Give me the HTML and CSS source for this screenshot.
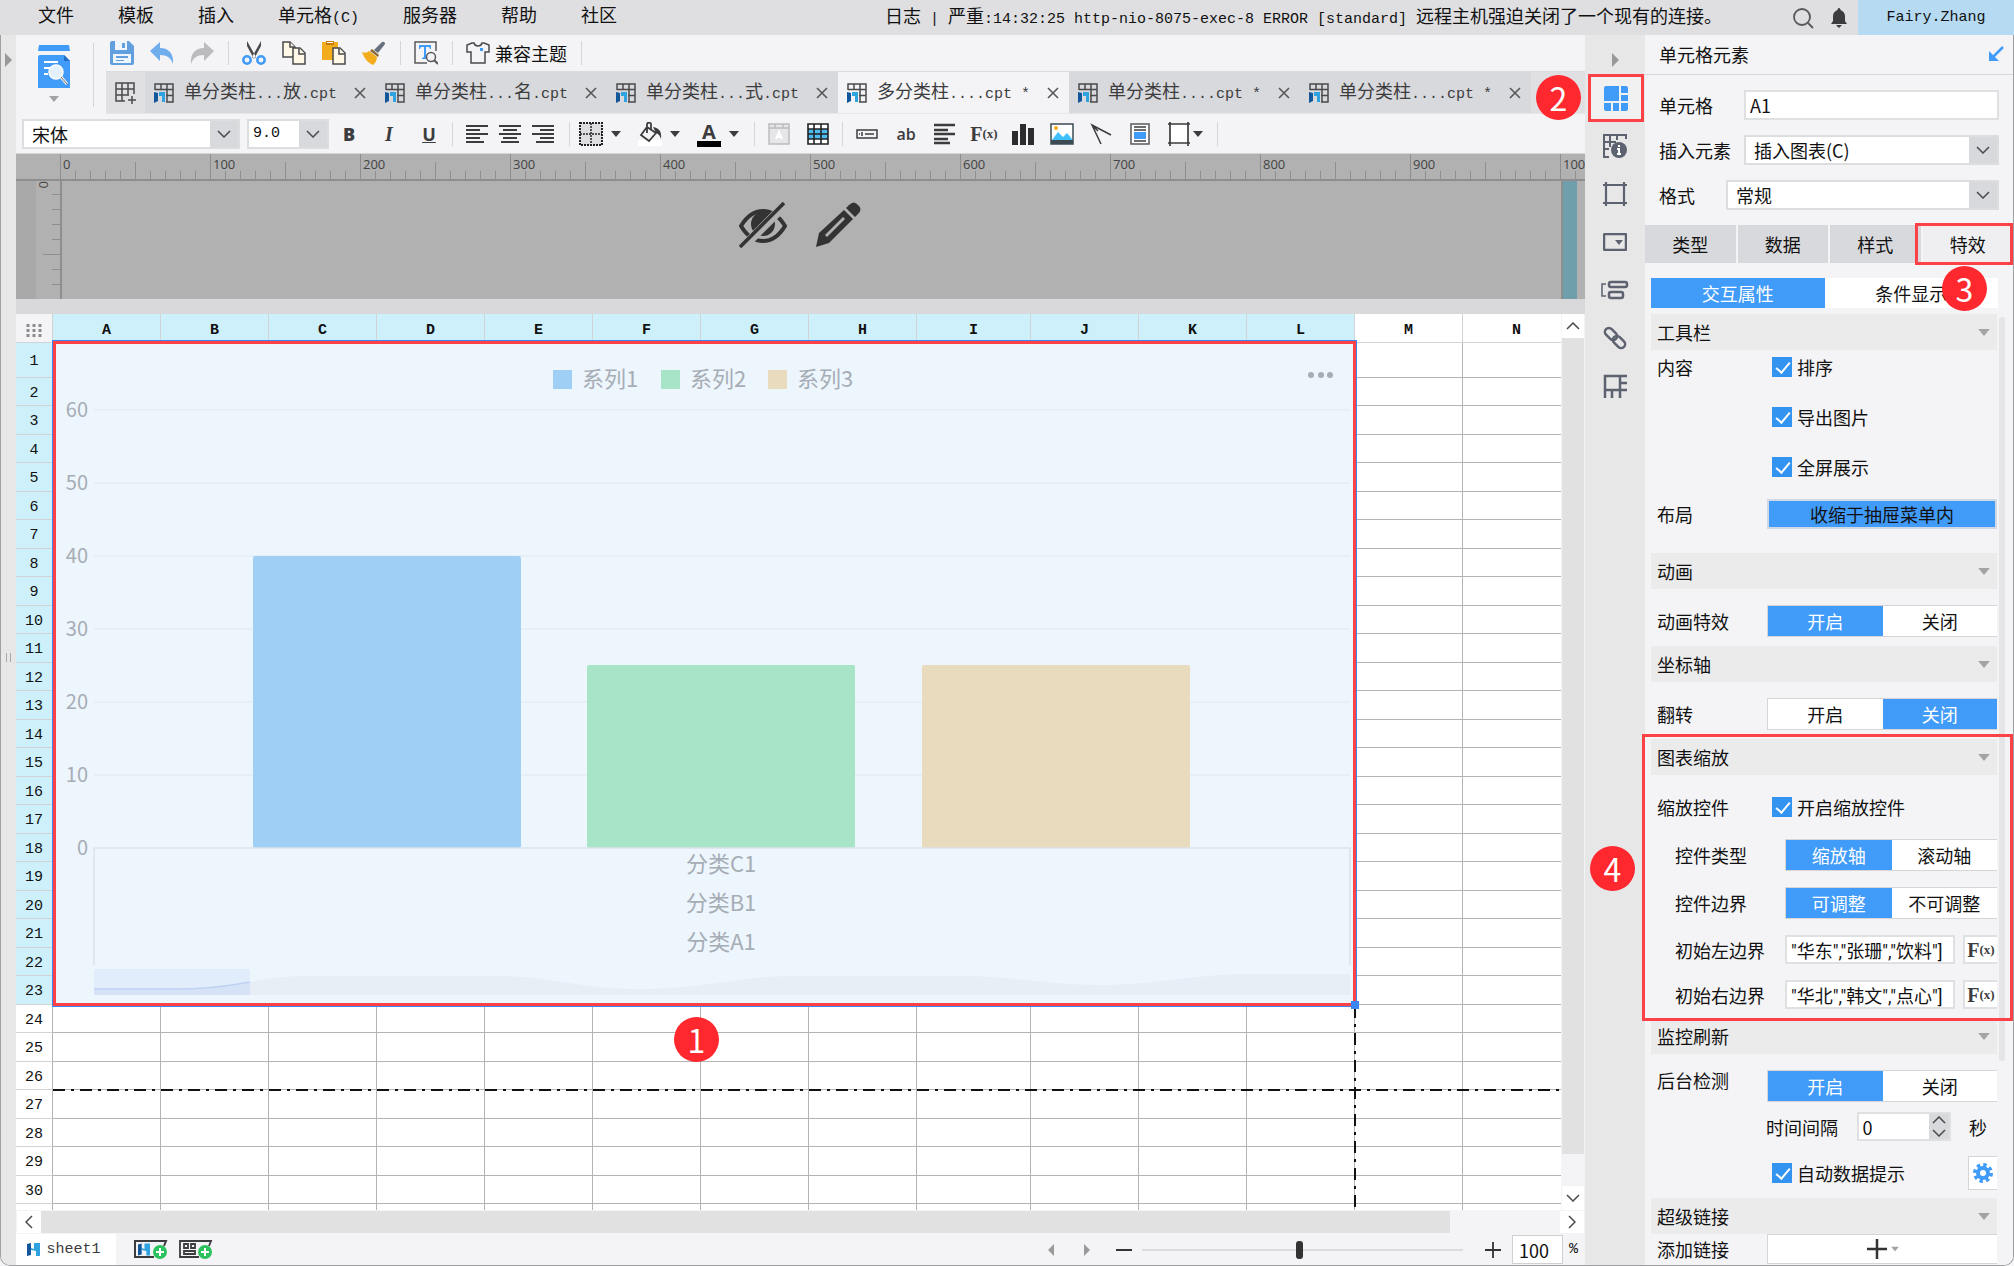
FILE: index.html
```html
<!DOCTYPE html>
<html lang="zh">
<head>
    <meta charset="UTF-8">
    <meta name="viewport" content="width=device-width, initial-scale=1.0">
    <title>报表设计器</title>
    <link rel="stylesheet" href="styles.css">
</head>
<body>
    <!-- 公用图标 -->
    <svg class="hidden" aria-hidden="true">
        <symbol id="i-cpt" viewBox="0 0 20 20">
            <path d="M1 7V1h18v18h-7M1 6.500h18M7 1v6M13 1v18M12 12.500h7" fill="none" stroke="#4a4a4c" stroke-width="1.500"/>
            <path d="M0 9l4 1v8l-4 2z" fill="#12579b"/>
            <path d="M5 9h6v10H8v-6H5z" fill="#2fa3e0"/>
        </symbol>
        <symbol id="i-close" viewBox="0 0 12 12">
            <path d="M1 1l10 10M11 1L1 11" fill="none" stroke="#58585a" stroke-width="1.600"/>
        </symbol>
        <symbol id="i-chevron" viewBox="0 0 14 8">
            <path d="M1 1l6 6 6-6" fill="none" stroke="#4a4a4c" stroke-width="1.500"/>
        </symbol>
        <symbol id="i-caret" viewBox="0 0 10 6">
            <path d="M0 0h10L5 6z" fill="currentColor"/>
        </symbol>
        <symbol id="i-logo" viewBox="0 0 13 13">
            <path d="M4 5l3 1V0h6v13H9V8L4 7z" fill="#2fa3e0"/>
            <path d="M0 1l4-1v12l-4 1z" fill="#12579b"/>
        </symbol>
    </svg>

    <!-- 菜单栏 -->
    <header class="menubar">
        <nav class="menus">
            <button>文件</button>
            <button>模板</button>
            <button>插入</button>
            <button>单元格<span class="mono">(C)</span></button>
            <button>服务器</button>
            <button>帮助</button>
            <button>社区</button>
        </nav>
        <div class="log">日志<span class="mono"> | </span>严重<span class="mono">:14:32:25 http-nio-8075-exec-8 ERROR [standard] </span>远程主机强迫关闭了一个现有的连接。</div>
        <button class="search-btn" aria-label="搜索">
            <svg width="22" height="22" viewBox="0 0 22 22"><g fill="none" stroke="#58585a" stroke-width="1.800"><circle cx="10" cy="10" r="8"/><path d="M16 16l5 5"/></g></svg>
        </button>
        <button class="bell-btn" aria-label="消息">
            <svg width="18" height="20" viewBox="0 0 18 20"><path d="M9 0c1 0 1.500 1 1.500 2C13 3 15 5 15 8v5l2 3H1l2-3V8c0-3 2-5 4.500-6C7.500 1 8 0 9 0zM6 17h6l-3 3z" fill="#3c3c3e"/></svg>
        </button>
        <button class="user mono">Fairy.Zhang</button>
    </header>

    <div class="shell">
        <aside class="left-strip">
            <svg class="strip-arrow" width="7" height="14" viewBox="0 0 7 14"><path d="M0 0l7 7-7 7z" fill="#999"/></svg>
            <span class="strip-grip"></span>
        </aside>

        <main class="workspace">
            <div class="ribbon">
                <button class="preview-btn" aria-label="预览">
                    <svg width="32" height="43" viewBox="0 0 32 43">
                        <path d="M1 0h30l1 6H0zM0 12q0-2 2-2h24l6 6v27H0z" fill="#419bf9"/>
                        <path d="M26 10v6h6z" fill="#1f6fc4"/>
                        <path d="M6 17h14M6 23h6M6 29h4" stroke="#fff" stroke-width="2"/>
                        <circle cx="18" cy="27" r="7" fill="#e3f1fe" stroke="#fff" stroke-width="1.500"/>
                        <path d="M23 32l6 7" stroke="#eee" stroke-width="3"/>
                        <path d="M23 32l6 7" stroke="#777" stroke-width="1"/>
                    </svg>
                    <svg class="gray" width="10" height="6"><use href="#i-caret"/></svg>
                </button>
                <div class="ribbon-main">
                    <div class="icon-row">
                        <button aria-label="保存"><svg width="24" height="24" viewBox="0 0 24 24"><path d="M2 0h17l5 5v17q0 2-2 2H2q-2 0-2-2V2q0-2 2-2z" fill="#629fde"/><path d="M5 0h12v9H5zM3 13h18v9H3z" fill="#eef5fc"/><path d="M12 2h3v5h-3zM6 15h12v2H6zM6 19h8v1H6z" fill="#629fde"/></svg></button>
                        <button aria-label="撤销"><svg width="24" height="24" viewBox="0 0 24 24"><path d="M10 1v6c9 0 14 6 13 16-2-6-6-9-13-9v6L0 10z" fill="#70adec"/></svg></button>
                        <button aria-label="重做"><svg width="24" height="24" viewBox="0 0 24 24"><path d="M14 1v6C5 7 0 13 1 23c2-6 6-9 13-9v6l10-10z" fill="#bcbcbe"/></svg></button>
                        <span class="sep"></span>
                        <button aria-label="剪切"><svg width="24" height="24" viewBox="0 0 24 24"><path d="M5 0l9 16-2 2L5 5zM19 0l-9 16 2 2 7-13z" fill="#4a4a4c"/><g fill="none" stroke="#419bf9" stroke-width="2.500"><circle cx="5" cy="19" r="3.700"/><circle cx="19" cy="19" r="3.700"/></g></svg></button>
                        <button aria-label="复制"><svg width="24" height="24" viewBox="0 0 24 24"><g fill="#fff8e6" stroke="#4a4a4c" stroke-width="1.500"><path d="M1 1h7l5 5v10H1z"/><path d="M8 1v5h5" /><path d="M11 7h7l5 5v11H11z"/><path d="M17 7v6h6"/></g></svg></button>
                        <button aria-label="粘贴"><svg width="24" height="24" viewBox="0 0 24 24"><path d="M0 1h16v18H0z" fill="#f2ac1c"/><path d="M4 0h8v4H4z" fill="#c87d08"/><path d="M5 1h6v1H5z" fill="#fff"/><g fill="#fff8e6" stroke="#4a4a4c" stroke-width="1.500"><path d="M11 7h7l5 5v11H11z"/><path d="M17 7v6h6"/></g></svg></button>
                        <button aria-label="格式刷"><svg width="24" height="24" viewBox="0 0 24 24"><path d="M20 1q3-1 3 2l-7 9-4-3z" fill="#66707e"/><path d="M10 8l7 6-1 2-8-6z" fill="#8c6a3a"/><path d="M7 10l8 6c0 3-2 7-4 8C6 22 2 17 0 11c3 1 5 1 7-1z" fill="#f2ac1c"/></svg></button>
                        <span class="sep"></span>
                        <button aria-label="查找"><svg width="24" height="24" viewBox="0 0 24 24"><path d="M22 10V1H1v21h12" fill="none" stroke="#58585a" stroke-width="1.500"/><path d="M5 4h12v4h-1l-1-2h-3v10l2 1v1H8v-1l2-1V6H7L6 8H5z" fill="#419bf9"/><circle cx="17" cy="16" r="4.500" fill="#f4f4f6" stroke="#58585a" stroke-width="1.500"/><path d="M20 19l4 4" stroke="#58585a" stroke-width="2"/></svg></button>
                        <span class="sep"></span>
                        <button class="theme-btn"><svg width="24" height="24" viewBox="0 0 24 24"><path d="M8 2H6L1 4v7h4v11h14V11h4V4l-5-2h-2c-1 4-7 4-8 0z" fill="none" stroke="#4a4a4c" stroke-width="1.500"/><path d="M14 7h3v3h-3z" fill="#419bf9"/></svg>兼容主题</button>
                        <span class="sep"></span>
                    </div>
                    <div class="file-tabs">
                        <button class="new-tab" aria-label="新建"><svg width="22" height="22" viewBox="0 0 22 22"><path d="M10 19H1V1h18v11M1 7h18M7 1v18M13 1v12M1 13h13M17 14v8M13 18h8" fill="none" stroke="#4a4a4c" stroke-width="1.500"/></svg></button>
                        <div class="file-tab"><svg width="20" height="20"><use href="#i-cpt"/></svg><span class="name">单分类柱<span class="mono">...</span>放<span class="mono">.cpt</span></span><button aria-label="关闭"><svg width="12" height="12"><use href="#i-close"/></svg></button></div>
                        <div class="file-tab"><svg width="20" height="20"><use href="#i-cpt"/></svg><span class="name">单分类柱<span class="mono">...</span>名<span class="mono">.cpt</span></span><button aria-label="关闭"><svg width="12" height="12"><use href="#i-close"/></svg></button></div>
                        <div class="file-tab"><svg width="20" height="20"><use href="#i-cpt"/></svg><span class="name">单分类柱<span class="mono">...</span>式<span class="mono">.cpt</span></span><button aria-label="关闭"><svg width="12" height="12"><use href="#i-close"/></svg></button></div>
                        <div class="file-tab active"><svg width="20" height="20"><use href="#i-cpt"/></svg><span class="name">多分类柱<span class="mono">....cpt *</span></span><button aria-label="关闭"><svg width="12" height="12"><use href="#i-close"/></svg></button></div>
                        <div class="file-tab"><svg width="20" height="20"><use href="#i-cpt"/></svg><span class="name">单分类柱<span class="mono">....cpt *</span></span><button aria-label="关闭"><svg width="12" height="12"><use href="#i-close"/></svg></button></div>
                        <div class="file-tab"><svg width="20" height="20"><use href="#i-cpt"/></svg><span class="name">单分类柱<span class="mono">....cpt *</span></span><button aria-label="关闭"><svg width="12" height="12"><use href="#i-close"/></svg></button></div>
                    </div>
                </div>
            </div>

            <!-- 格式工具栏 -->
            <div class="format-bar">
                <div class="combo font-name">
                    <select aria-label="字体"><option>宋体</option></select>
                    <span class="combo-btn"><svg width="14" height="8"><use href="#i-chevron"/></svg></span>
                </div>
                <div class="combo font-size">
                    <select class="mono" aria-label="字号"><option>9.0</option></select>
                    <span class="combo-btn"><svg width="14" height="8"><use href="#i-chevron"/></svg></span>
                </div>
                <div class="group wide">
                    <button class="letter"><b>B</b></button>
                    <button class="letter italic"><i>I</i></button>
                    <button class="letter"><u>U</u></button>
                </div>
                <div class="group tight">
                    <button aria-label="左对齐"><svg width="24" height="20" viewBox="0 0 24 20"><path d="M1 2h22M1 6h14M1 10h22M1 14h14M1 18h18" stroke="#3c3c3e" stroke-width="2"/></svg></button>
                    <button aria-label="居中"><svg width="24" height="20" viewBox="0 0 24 20"><path d="M1 2h22M5 6h14M1 10h22M5 14h14M3 18h18" stroke="#3c3c3e" stroke-width="2"/></svg></button>
                    <button aria-label="右对齐"><svg width="24" height="20" viewBox="0 0 24 20"><path d="M1 2h22M9 6h14M1 10h22M9 14h14M5 18h18" stroke="#3c3c3e" stroke-width="2"/></svg></button>
                </div>
                <div class="group pairs">
                    <button class="with-caret" aria-label="边框"><svg width="24" height="24" viewBox="0 0 24 24"><path d="M1 1h22v22H1z" fill="#dedee0" stroke="#222" stroke-width="2" stroke-dasharray="2 1"/><path d="M12 1v22M1 12h22" stroke="#222" stroke-width="1.500" stroke-dasharray="2 1"/></svg><svg width="10" height="6"><use href="#i-caret"/></svg></button>
                    <button class="with-caret" aria-label="背景色"><svg width="24" height="24" viewBox="0 0 24 24"><path d="M0 18h24v6H0z" fill="#fff"/><path d="M9 5l9 6-7 8-8-6zM9 11V2q2-3 4 0v5" fill="none" stroke="#3c3c3e" stroke-width="1.800"/><path d="M15 5c6 1 9 4 8 12-1-3-2-5-5-6z" fill="#3c3c3e"/></svg><svg width="10" height="6"><use href="#i-caret"/></svg></button>
                    <button class="with-caret" aria-label="字体颜色"><span class="font-color">A</span><svg width="10" height="6"><use href="#i-caret"/></svg></button>
                </div>
                <div class="group">
                    <button aria-label="合并"><svg width="24" height="22" viewBox="0 0 24 22"><path d="M2 1h20v20H2zM2 5h20M8 1v4M16 1v4" fill="#e6e6e8" stroke="#bcbcbe" stroke-width="1.500"/><path d="M9 16l3-7 3 7M10 14h4" fill="none" stroke="#fff" stroke-width="2"/></svg></button>
                    <button aria-label="拆分"><svg width="24" height="22" viewBox="0 0 24 22"><path d="M2 1h20v20H2z" fill="#fff"/><path d="M2 6h20v10H2z" fill="#4cbcf0"/><path d="M2 1h20v20H2zM2 6h20M2 11h20M2 16h20M8 1v20M15 1v20" fill="none" stroke="#222" stroke-width="1.600"/></svg></button>
                </div>
                <div class="group last">
                    <button aria-label="数据列"><svg width="24" height="24" viewBox="0 0 24 24"><path d="M2 8h20v8H2zM7 10v4M10 12h9M4 12h1" fill="none" stroke="#3c3c3e" stroke-width="1.500"/></svg></button>
                    <button class="ab">ab</button>
                    <button aria-label="富文本"><svg width="24" height="22" viewBox="0 0 24 22"><path d="M1 2h21M1 7h14M1 11h21M1 16h14M1 20h16" stroke="#3c3c3e" stroke-width="2.500"/></svg></button>
                    <button class="fx">F<small>(x)</small></button>
                    <button aria-label="图表"><svg width="24" height="22" viewBox="0 0 24 22"><path d="M1 8h6v14H1zM9 1h6v21H9zM17 5h6v17h-6z" fill="#2c2c2e"/></svg></button>
                    <button aria-label="图片"><svg width="24" height="22" viewBox="0 0 24 22"><path d="M1 1h22v20H1z" fill="#fff" stroke="#3c4a54" stroke-width="1.500"/><path d="M2 17l6-8 5 5 4-4 5 6v2H2z" fill="#3fc0fb"/><path d="M1 17h22v4H1z" fill="#3c4a54"/><circle cx="6" cy="5" r="2" fill="#f2ac1c"/></svg></button>
                    <button aria-label="斜线"><svg width="24" height="24" viewBox="0 0 24 24"><path d="M12 22L3 3l19 10M3 3l6 6" fill="none" stroke="#3c3c3e" stroke-width="1.500"/></svg></button>
                    <button aria-label="子报表"><svg width="24" height="22" viewBox="0 0 24 22"><path d="M3 1h18v20H3z" fill="#fff" stroke="#58585a" stroke-width="1.500"/><path d="M6 4h12M6 7h12M6 18h12" stroke="#3c3c3e" stroke-width="1.500"/><path d="M6 9h12v7H6z" fill="#419bf9"/></svg></button>
                    <button class="with-caret" aria-label="悬浮元素"><svg width="24" height="24" viewBox="0 0 24 24"><path d="M3 3h18v18H3z" fill="#fff"/><path d="M1 2h22M1 21h22M3 0v24M21 0v24" fill="none" stroke="#3c3c3e" stroke-width="1.700"/></svg><svg width="10" height="6"><use href="#i-caret"/></svg></button>
                </div>
            </div>

            <!-- 报表头区域 -->
            <section class="report-head">
                <div class="ruler">
                    <span class="mark">0</span><span class="mark">100</span><span class="mark">200</span><span class="mark">300</span><span class="mark">400</span><span class="mark">500</span><span class="mark">600</span><span class="mark">700</span><span class="mark">800</span><span class="mark">900</span><span class="mark">1000</span>
                </div>
                <div class="head-body">
                    <div class="v-ruler"><span>0</span></div>
                    <div class="head-canvas">
                        <svg width="48" height="46" viewBox="0 0 48 46" fill="none" stroke="#333">
                            <path d="M2 24C8 14 15 9 24 9s16 5 22 15c-6 10-13 15-22 15S8 34 2 24z" stroke-width="4"/>
                            <circle cx="24" cy="22" r="12" fill="#333" stroke="none"/>
                            <path d="M2 47L48 1" stroke="#b1b1b1" stroke-width="9"/>
                            <path d="M1 45L45 1" stroke-width="3.500"/>
                        </svg>
                        <svg width="46" height="46" viewBox="0 0 46 46">
                            <path d="M34 3q5-5 9 0 5 4 0 9l-3 3-9-9z" fill="#333"/>
                            <path d="M29 8l9 9-24 24-13 4 3-14z" fill="#333"/>
                            <path d="M28 15l2 2-18 18-2-2z" fill="#b1b1b1"/>
                        </svg>
                    </div>
                    <div class="head-edge"></div>
                </div>
            </section>

            <!-- 表格区域 -->
            <div class="sheet-area">
                <div class="sheet">
                    <table class="cells">
                        <colgroup>
                            <col class="c-head"><col><col><col><col><col><col><col><col><col class="c-wide"><col><col><col><col><col>
                        </colgroup>
                        <thead><tr id="colHeads"></tr></thead>
                        <tbody id="rows"></tbody>
                    </table>
                    <svg class="page-line-h" width="100%" height="2"><path d="M0 1h4000" stroke="#111" stroke-width="2" stroke-dasharray="12 6 3 6"/></svg>
                    <svg class="page-line-v" width="2" height="100%"><path d="M1 0v2000" stroke="#111" stroke-width="2" stroke-dasharray="12 6 3 6"/></svg>

                    <div class="chart">
                        <svg viewBox="0 0 1297 659" width="100%" height="100%">
                            <g stroke="#e4ecf4" stroke-width="1.500">
                                <path d="M38 66h1256M38 139h1256M38 212h1256M38 285h1256M38 358h1256M38 431h1256"/>
                            </g>
                            <g class="axis-label" text-anchor="end">
                                <text x="32" y="73">60</text>
                                <text x="32" y="146">50</text>
                                <text x="32" y="219">40</text>
                                <text x="32" y="292">30</text>
                                <text x="32" y="365">20</text>
                                <text x="32" y="438">10</text>
                                <text x="32" y="511">0</text>
                            </g>
                            <rect x="197" y="212" width="268" height="292" rx="2" fill="#a0cff6"/>
                            <rect x="531" y="321" width="268" height="183" rx="2" fill="#a8e4c7"/>
                            <rect x="866" y="321" width="268" height="183" rx="2" fill="#e9dbbd"/>
                            <path d="M38 621V504h1256v117" fill="none" stroke="#dae2ea" stroke-width="1.500"/>
                            <rect x="497" y="26" width="19" height="19" fill="#a0cff6"/>
                            <rect x="605" y="26" width="19" height="19" fill="#a8e4c7"/>
                            <rect x="712" y="26" width="19" height="19" fill="#e9dbbd"/>
                            <g class="legend-label">
                                <text x="526" y="43">系列1</text>
                                <text x="634" y="43">系列2</text>
                                <text x="741" y="43">系列3</text>
                            </g>
                            <g fill="#a6adb5"><circle cx="1255" cy="31" r="3"/><circle cx="1265" cy="31" r="3"/><circle cx="1274" cy="31" r="3"/></g>
                            <g class="legend-label" text-anchor="middle">
                                <text x="665" y="528">分类C1</text>
                                <text x="665" y="567">分类B1</text>
                                <text x="665" y="606">分类A1</text>
                            </g>
                            <!-- 缩放轴 -->
                            <path d="M194 638C225 632 240 632 260 632H440C500 632 520 645 585 645S680 632 740 632H900C960 632 990 641 1044 641S1140 630 1194 630H1294V651H194z" fill="#e7eef6"/>
                            <rect x="38" y="625" width="156" height="26" fill="#e2edfb"/>
                            <path d="M38 645H120C160 645 180 640 194 638V651H38z" fill="#d6e3f6"/>
                            <path d="M38 645H120C160 645 180 640 194 638" fill="none" stroke="#bfd2f2" stroke-width="1.500"/>
                        </svg>
                    </div>
                    <span class="chart-handle"></span>
                    <span class="badge badge-1">1</span>
                </div>
                <div class="v-scroll">
                    <button aria-label="向上"><svg class="up" width="14" height="8"><use href="#i-chevron"/></svg></button>
                    <div class="v-thumb"></div>
                    <button aria-label="向下"><svg width="14" height="8"><use href="#i-chevron"/></svg></button>
                </div>
            </div>
            <div class="h-scroll">
                <button aria-label="向左"><svg width="8" height="14" viewBox="0 0 8 14"><path d="M7 1L1 7l6 6" fill="none" stroke="#4a4a4c" stroke-width="1.500"/></svg></button>
                <div class="h-thumb"></div>
                <button aria-label="向右"><svg width="8" height="14" viewBox="0 0 8 14"><path d="M1 1l6 6-6 6" fill="none" stroke="#4a4a4c" stroke-width="1.500"/></svg></button>
            </div>

            <footer class="status-bar">
                <button class="sheet-tab mono"><svg width="13" height="13"><use href="#i-logo"/></svg>sheet1</button>
                <button class="add-sheet" aria-label="新增工作表"><svg width="34" height="20" viewBox="0 0 34 20"><path d="M20 17H1V1h31l-2 5" fill="none" stroke="#3c3c3e" stroke-width="2"/><use href="#i-logo" x="4" y="3" width="12" height="13"/><circle cx="26" cy="12" r="7" fill="#2bc25e"/><path d="M26 8v8M22 12h8" stroke="#fff" stroke-width="2"/></svg></button>
                <button class="add-sheet" aria-label="新增聚合报表"><svg width="34" height="20" viewBox="0 0 34 20"><path d="M20 17H1V1h31l-2 5M5 4h4v4H5zM12 4h4v4h-4zM5 11h11v3H5z" fill="none" stroke="#3c3c3e" stroke-width="1.800"/><circle cx="26" cy="12" r="7" fill="#2bc25e"/><path d="M26 8v8M22 12h8" stroke="#fff" stroke-width="2"/></svg></button>
                <div class="zoom-tools">
                    <button aria-label="上一页"><svg width="6" height="12" viewBox="0 0 6 12"><path d="M6 0v12L0 6z" fill="#999"/></svg></button>
                    <button class="page-next" aria-label="下一页"><svg width="6" height="12" viewBox="0 0 6 12"><path d="M0 0v12l6-6z" fill="#999"/></svg></button>
                    <button aria-label="缩小"><svg width="16" height="16" viewBox="0 0 16 16"><path d="M0 8h16" stroke="#333" stroke-width="2"/></svg></button>
                    <input class="zoom-range" type="range" min="0" max="100" value="49" aria-label="缩放">
                    <button aria-label="放大"><svg width="16" height="16" viewBox="0 0 16 16"><path d="M0 8h16M8 0v16" stroke="#333" stroke-width="1.800"/></svg></button>
                    <input class="zoom-value" id="zoomValue" type="text" value="100">
                    <label class="mono" for="zoomValue">%</label>
                </div>
            </footer>
        </main>

        <!-- 侧边图标 -->
        <aside class="side-strip">
            <button class="side-fold" aria-label="收起"><svg width="7" height="14" viewBox="0 0 7 14"><path d="M0 0l7 7-7 7z" fill="#999"/></svg></button>
            <button class="side-btn current" aria-label="单元格元素">
                <svg width="24" height="25" viewBox="0 0 24 25" fill="#419bf9"><path d="M0 2q0-2 2-2h13v15H0zM17 0h5q2 0 2 2v5h-7zM17 9h7v6h-7zM0 17h7v8H2q-2 0-2-2zM9 17h6v8H9zM17 17h7v6q0 2-2 2h-5z"/></svg>
                <span class="badge badge-2">2</span>
            </button>
            <button class="side-btn" aria-label="单元格属性"><svg width="26" height="26" viewBox="0 0 26 26"><path d="M24 6V2H2v22h5M2 9h12M8 2v12M15 2v5M2 16h5" fill="none" stroke="#5c6270" stroke-width="2"/><circle cx="17" cy="17" r="8" fill="#5c6270"/><path d="M17 12v2M15 16h2v5M15 21h4" fill="none" stroke="#fff" stroke-width="2"/></svg></button>
            <button class="side-btn" aria-label="悬浮元素"><svg width="24" height="24" viewBox="0 0 24 24"><path d="M3 3h18v18H3zM0 3h24M0 21h24M3 0v24M21 0v24" fill="none" stroke="#5c6270" stroke-width="2.200"/></svg></button>
            <button class="side-btn" aria-label="控件设置"><svg width="24" height="18" viewBox="0 0 24 18"><rect x="1" y="1" width="22" height="16" rx="1" fill="none" stroke="#5c6270" stroke-width="2.500"/><path d="M12 7h8l-4 5z" fill="#5c6270"/></svg></button>
            <button class="side-btn" aria-label="条件属性"><svg width="28" height="20" viewBox="0 0 28 20" fill="none" stroke="#5c6270"><path d="M5 4H1v12h4" stroke-width="1.500"/><rect x="8" y="2" width="18" height="5" rx="2" stroke-width="2.500"/><rect x="8" y="12" width="14" height="6" rx="2" stroke-width="2.500"/></svg></button>
            <button class="side-btn" aria-label="超级链接"><svg width="24" height="24" viewBox="0 0 24 24" fill="none" stroke="#5c6270" stroke-width="2.500"><rect x="1" y="4" width="14" height="8" rx="4" transform="rotate(45 8 8)"/><rect x="9" y="12" width="14" height="8" rx="4" transform="rotate(45 16 16)"/></svg></button>
            <button class="side-btn" aria-label="冻结"><svg width="24" height="24" viewBox="0 0 24 24"><path d="M2 24V2h22M17 2v22M2 16h22M9 16v8M17 9h7" fill="none" stroke="#5c6270" stroke-width="2.500"/></svg></button>
            <span class="badge badge-4">4</span>
        </aside>

        <!-- 属性面板 -->
        <aside class="panel">
            <div class="panel-title">单元格元素
                <svg width="16" height="16" viewBox="0 0 16 16"><path d="M15 1L5 11" stroke="#419bf9" stroke-width="2.500"/><path d="M1 5v10h10z" fill="#419bf9"/></svg>
            </div>
            <div class="panel-form">
                <div class="field"><label for="cell">单元格</label><input id="cell" class="text-box" type="text" value="A1"></div>
                <div class="field"><label for="insertType">插入元素</label>
                    <div class="combo"><select id="insertType"><option>插入图表(C)</option></select><span class="combo-btn"><svg width="14" height="8"><use href="#i-chevron"/></svg></span></div>
                </div>
                <div class="field short"><label for="format">格式</label>
                    <div class="combo"><select id="format"><option>常规</option></select><span class="combo-btn"><svg width="14" height="8"><use href="#i-chevron"/></svg></span></div>
                </div>
            </div>
            <div class="panel-tabs">
                <button>类型</button>
                <button>数据</button>
                <button>样式</button>
                <button class="active">特效</button>
                <span class="mark-box tab-mark"></span>
                <span class="badge badge-3">3</span>
            </div>
            <div class="sub-tabs">
                <button class="on">交互属性</button>
                <button>条件显示</button>
            </div>

            <div class="panel-scroll">
                <div class="panel-body">
                    <h3 class="section">工具栏<svg class="gray" width="12" height="7" viewBox="0 0 10 6"><use href="#i-caret"/></svg></h3>
                    <div class="row top">
                        <span class="label">内容</span>
                        <div class="checks">
                            <label class="check"><input type="checkbox" checked>排序</label>
                            <label class="check"><input type="checkbox" checked>导出图片</label>
                            <label class="check"><input type="checkbox" checked>全屏展示</label>
                        </div>
                    </div>
                    <div class="row layout">
                        <span class="label">布局</span>
                        <button class="layout-btn">收缩于抽屉菜单内</button>
                    </div>

                    <h3 class="section spaced">动画<svg class="gray" width="12" height="7" viewBox="0 0 10 6"><use href="#i-caret"/></svg></h3>
                    <div class="row">
                        <span class="label">动画特效</span>
                        <div class="seg"><button class="on">开启</button><button>关闭</button></div>
                    </div>

                    <h3 class="section">坐标轴<svg class="gray" width="12" height="7" viewBox="0 0 10 6"><use href="#i-caret"/></svg></h3>
                    <div class="row">
                        <span class="label">翻转</span>
                        <div class="seg"><button>开启</button><button class="on">关闭</button></div>
                    </div>

                    <div class="zoom-group">
                        <h3 class="section">图表缩放<svg class="gray" width="12" height="7" viewBox="0 0 10 6"><use href="#i-caret"/></svg></h3>
                        <div class="row">
                            <span class="label">缩放控件</span>
                            <label class="check"><input type="checkbox" checked>开启缩放控件</label>
                        </div>
                        <div class="row sub">
                            <span class="label">控件类型</span>
                            <div class="seg"><button class="on">缩放轴</button><button>滚动轴</button></div>
                        </div>
                        <div class="row sub">
                            <span class="label">控件边界</span>
                            <div class="seg"><button class="on">可调整</button><button>不可调整</button></div>
                        </div>
                        <div class="row sub low">
                            <label class="label" for="leftEdge">初始左边界</label>
                            <input id="leftEdge" class="text-box" type="text" value="&quot;华东&quot;,&quot;张珊&quot;,&quot;饮料&quot;]">
                            <button class="fx fx-btn">F<small>(x)</small></button>
                        </div>
                        <div class="row sub low">
                            <label class="label" for="rightEdge">初始右边界</label>
                            <input id="rightEdge" class="text-box" type="text" value="&quot;华北&quot;,&quot;韩文&quot;,&quot;点心&quot;]">
                            <button class="fx fx-btn">F<small>(x)</small></button>
                        </div>
                        <span class="mark-box group-mark"></span>
                    </div>

                    <h3 class="section">监控刷新<svg class="gray" width="12" height="7" viewBox="0 0 10 6"><use href="#i-caret"/></svg></h3>
                    <div class="row">
                        <span class="label raised">后台检测</span>
                        <div class="seg"><button class="on">开启</button><button>关闭</button></div>
                    </div>
                    <div class="row low interval">
                        <label for="interval">时间间隔</label>
                        <div class="spinner">
                            <input id="interval" type="text" value="0">
                            <span class="spin-btns">
                                <button aria-label="增加"><svg class="up" width="14" height="8"><use href="#i-chevron"/></svg></button>
                                <button aria-label="减少"><svg width="14" height="8"><use href="#i-chevron"/></svg></button>
                            </span>
                        </div>
                        <span>秒</span>
                    </div>
                    <div class="row">
                        <span class="label"></span>
                        <label class="check"><input type="checkbox" checked>自动数据提示</label>
                        <button class="gear-btn" aria-label="设置"><svg width="20" height="20" viewBox="0 0 20 20"><circle cx="10" cy="10" r="5" fill="none" stroke="#419bf9" stroke-width="4"/><circle cx="10" cy="10" r="8" fill="none" stroke="#419bf9" stroke-width="4" stroke-dasharray="3.300 2.983"/></svg></button>
                    </div>

                    <h3 class="section">超级链接<svg class="gray" width="12" height="7" viewBox="0 0 10 6"><use href="#i-caret"/></svg></h3>
                    <div class="row flush">
                        <span class="label">添加链接</span>
                        <button class="add-link" aria-label="添加链接"><svg width="20" height="20" viewBox="0 0 20 20"><path d="M0 10h20M10 0v20" stroke="#333" stroke-width="2.500"/></svg><svg class="gray" width="8" height="6" viewBox="0 0 10 6"><use href="#i-caret"/></svg></button>
                    </div>
                </div>
                <div class="panel-bar"></div>
            </div>
        </aside>
    </div>

    <script>
        // 生成列头和单元格
        const cols = 'ABCDEFGHIJKLMN'.split('');
        const selectedCols = 12;
        const selectedRows = 23;

        const corner = '<th class="corner"><svg width="16" height="14" viewBox="0 0 16 14"><path d="M2 0v14M8 0v14M14 0v14" stroke="#8c8c8e" stroke-width="3" stroke-dasharray="3 2"/></svg></th>';
        document.getElementById('colHeads').innerHTML = corner + cols.map(function (c, i) {
            return '<th class="' + (i < selectedCols ? 'selected' : '') + '">' + c + '</th>';
        }).join('');

        let html = '';
        for (let r = 1; r <= 31; r++) {
            html += '<tr><th class="' + (r <= selectedRows ? 'selected' : '') + '">' + (r <= 30 ? r : '') + '</th>' + '<td></td>'.repeat(cols.length) + '</tr>';
        }
        document.getElementById('rows').innerHTML = html;
    </script>
</body>
</html>
```

FILE: styles.css
```css
* {
    box-sizing: border-box;
}
body {
    margin: 0;
    height: 100vh;
    display: flex;
    flex-direction: column;
    overflow: hidden;
    background-color: #f4f4f6;
    color: #111;
    font-family: "Noto Sans CJK SC", sans-serif;
    font-size: 18px;
    line-height: 24px;
}
button, input, select {
    font: inherit;
    color: inherit;
    margin: 0;
    padding: 0;
    border: none;
    background: none;
    border-radius: 0;
}
button {
    display: flex;
    align-items: center;
    justify-content: center;
    flex: none;
    cursor: pointer;
    white-space: nowrap;
}
svg {
    display: block;
    flex: none;
}
.hidden {
    display: none;
}
.mono {
    font-family: "Liberation Mono", monospace;
    font-size: 15px;
    white-space: pre;
}
.gray {
    color: #a3a3a5;
}
.up {
    transform: rotate(180deg);
}

/* 菜单栏 */
.menubar {
    display: flex;
    align-items: center;
    flex: none;
    height: 35px;
    padding-left: 38px;
    background-color: #dfdfe1;
}
.menus {
    display: flex;
    gap: 44px;
    flex: 1;
    padding-bottom: 3px;
}
.menus button {
    align-items: baseline;
}
.log {
    white-space: nowrap;
    margin-right: 70px;
}
.search-btn {
    margin-right: 16px;
}
.bell-btn {
    margin-right: 10px;
}
.user {
    width: 156px;
    height: 35px;
    background-color: #b5daf2;
}

.shell {
    display: flex;
    flex: 1;
    min-height: 0;
    border: 1px solid #a0a0a2;
    border-top: none;
    border-radius: 0 0 10px 10px;
    overflow: hidden;
}
.left-strip {
    flex: none;
    width: 15px;
    display: flex;
    flex-direction: column;
    align-items: center;
    background-color: #e7e7e7;
    padding: 18px 0;
}
.strip-grip {
    width: 5px;
    height: 9px;
    margin: auto 0;
    border: 1px solid #aaa;
    border-width: 0 1px;
}
.workspace {
    flex: 1;
    min-width: 0;
    display: flex;
    flex-direction: column;
}

/* 工具栏 */
.ribbon {
    display: flex;
    height: 80px;
}
.preview-btn {
    flex-direction: column;
    justify-content: flex-start;
    gap: 8px;
    width: 78px;
    height: 64px;
    margin: 8px 12px 0 0;
    padding: 2px 23px 0 22px;
    border-right: 1px solid #d5d5d8;
}
.ribbon-main {
    flex: 1;
    min-width: 0;
}
.icon-row {
    display: flex;
    align-items: center;
    gap: 16px;
    height: 36px;
    padding-left: 4px;
}
.sep {
    width: 1px;
    height: 24px;
    margin: 0 -3px 0 -2px;
    background-color: #d5d5d8;
}
.theme-btn {
    gap: 5px;
}
.file-tabs {
    display: flex;
    height: 43px;
    border-top: 1px solid #dcdcdf;
    border-bottom: 1px solid #e6e6e8;
    background-color: #e0e0e3;
}
.new-tab {
    width: 39px;
}
.file-tab {
    display: flex;
    align-items: center;
    flex: 0 1 231px;
    min-width: 0;
    padding: 0 10px 0 9px;
    background-color: #d8d9dc;
    color: #3c3c3e;
}
.file-tab.active {
    background-color: #f4f4f6;
}
.file-tab .name {
    flex: 1;
    margin-left: 10px;
    white-space: nowrap;
    overflow: hidden;
}
.format-bar {
    display: flex;
    align-items: center;
    flex: none;
    height: 39px;
    padding-left: 6px;
    border-bottom: 1px solid #d5d5d8;
}
.combo {
    display: flex;
    flex: 1;
    min-width: 0;
    height: 30px;
    border: 2px solid #dcdddf;
    background-color: #fff;
}
.combo select {
    flex: 1;
    min-width: 0;
    padding-left: 8px;
    appearance: none;
    outline: none;
}
.combo-btn {
    display: flex;
    align-items: center;
    justify-content: center;
    width: 28px;
    background-color: #d8d9dc;
}
.font-name {
    flex: 0 1 218px;
    margin-right: 7px;
}
.font-size {
    flex: 0 0 82px;
}
.font-size select {
    padding-left: 4px;
}
.group {
    display: flex;
    align-items: center;
    gap: 15px;
    height: 24px;
    padding: 0 12px;
    border-right: 1px solid #d5d5d8;
    color: #3c3c3e;
}
.group > button {
    min-width: 24px;
}
.group.wide {
    gap: 16px;
    padding: 0 11px 0 8px;
}
.group.tight {
    gap: 9px;
    padding-right: 14px;
}
.group.pairs {
    gap: 17px;
    padding: 0 15px 0 9px;
}
.group.last {
    padding-right: 14px;
}
.with-caret {
    gap: 8px;
}
.last .with-caret {
    gap: 2px;
}
.letter {
    font-family: "Open Sans", sans-serif;
    font-weight: bold;
}
.letter.italic {
    font-family: "Liberation Serif", serif;
    font-size: 20px;
}
.font-color {
    width: 24px;
    height: 25px;
    border-bottom: 6px solid #000;
    font-family: "Open Sans", sans-serif;
    font-size: 20px;
    font-weight: bold;
    line-height: 19px;
}
.ab {
    font-family: "Open Sans", sans-serif;
    font-size: 16px;
    font-weight: 600;
}
.fx {
    font-family: "Liberation Serif", serif;
    font-size: 20px;
    font-weight: bold;
    color: #3c3c3e;
}
.fx small {
    font-size: 13px;
}
.group .fx {
    width: 24px;
}

/* 报表头 */
.report-head {
    flex: none;
    height: 145px;
    display: flex;
    flex-direction: column;
    background-color: #b1b1b1;
}
.ruler {
    display: flex;
    flex: none;
    height: 27px;
    padding-left: 44px;
    overflow: hidden;
    border-bottom: 2px solid #8e8e8e;
}
.mark {
    flex: 0 0 150px;
    padding: 2px 0 0 2px;
    border-left: 1px solid #8e8e8e;
    color: #444;
    font-family: "Open Sans", sans-serif;
    font-size: 13px;
    line-height: 16px;
    background:
        repeating-linear-gradient(to right, transparent 0 14px, #8e8e8e 14px 15px) left bottom / 100% 8px no-repeat,
        linear-gradient(#8e8e8e, #8e8e8e) 74px 100% / 1px 17px no-repeat;
}
.head-body {
    display: flex;
    flex: 1;
}
.v-ruler {
    width: 46px;
    padding-left: 20px;
    border-right: 2px solid #8e8e8e;
    font-family: "Open Sans", sans-serif;
    font-size: 13px;
    line-height: 16px;
    color: #444;
    background:
        linear-gradient(#a9a9a9, #a9a9a9) left top / 20px 100% no-repeat,
        repeating-linear-gradient(to bottom, transparent 0 13px, #8e8e8e 13px 14px, transparent 14px 15px) right top / 8px 100% no-repeat,
        linear-gradient(#8e8e8e, #8e8e8e) right 73px / 17px 1px no-repeat;
}
.v-ruler span {
    display: block;
    writing-mode: vertical-rl;
}
.head-canvas {
    flex: 1;
    display: flex;
    justify-content: center;
    gap: 28px;
    padding: 21px 24px 0 0;
}
.head-edge {
    width: 24px;
    border-left: 2px solid #8e8e8e;
    background: linear-gradient(#6f9fab, #6f9fab) left top / 14px 100% no-repeat;
}

/* 表格 */
.sheet-area {
    display: flex;
    flex: 1;
    min-height: 0;
    border-top: 15px solid #d9d9dc;
}
.sheet {
    position: relative;
    flex: 1;
    min-width: 0;
    overflow: hidden;
    background-color: #fff;
}
.cells {
    width: 100%;
    table-layout: fixed;
    border-collapse: separate;
    border-spacing: 0;
    font-family: "Liberation Mono", monospace;
    font-size: 15px;
    line-height: 20px;
}
.cells col {
    width: 108px;
}
.cells .c-head {
    width: 37px;
}
.cells .c-wide {
    width: 114px;
}
.cells th, .cells td {
    height: 28px;
    padding: 0;
    border-right: 1px solid #b4b4b4;
    border-bottom: 1px solid #b4b4b4;
}
.cells th {
    padding-top: 4px;
    border-color: #d0d4d7;
}
.cells thead th {
    height: 29px;
    padding-top: 6px;
}
.cells thead th svg {
    margin: 0 auto;
}
.cells tbody th {
    font-weight: normal;
    border-right-color: #b4b4b4;
}
.cells tbody tr:nth-child(odd) th {
    height: 29px;
}
.cells tbody tr:first-child th {
    height: 35px;
}
.cells .selected {
    background-color: #cdf0fb;
}
.cells .corner {
    background-color: #f4f4f6;
}
.page-line-h {
    position: absolute;
    left: 37px;
    top: 775px;
}
.page-line-v {
    position: absolute;
    left: 1338px;
    top: 692px;
}
.chart {
    position: absolute;
    left: 37px;
    top: 27px;
    width: 1303px;
    height: 665px;
    border: 3px solid #fd4247;
    outline: 1px solid #3b86f0;
    background-color: #edf5fd;
}
.chart text {
    fill: #a6adb5;
}
.axis-label {
    font-size: 20px;
}
.legend-label {
    font-size: 22px;
}
.chart-handle {
    position: absolute;
    left: 1335px;
    top: 687px;
    width: 8px;
    height: 8px;
    background-color: #3b86f0;
}

/* 滚动条 */
.v-scroll {
    display: flex;
    flex-direction: column;
    width: 24px;
    padding: 0 1px;
}
.v-scroll button {
    height: 24px;
    background-color: #fff;
}
.v-thumb {
    flex: 1;
    margin-bottom: 32px;
    background-color: #e1e1e1;
}
.h-scroll {
    display: flex;
    flex: none;
    height: 24px;
    padding: 1px;
}
.h-scroll button {
    width: 24px;
    background-color: #fff;
}
.h-thumb {
    flex: 1;
    margin-right: 110px;
    background-color: #e1e1e1;
}
.status-bar {
    display: flex;
    align-items: center;
    flex: none;
    height: 31px;
}
.sheet-tab {
    gap: 6px;
    width: 100px;
    height: 31px;
    margin-right: 18px;
    padding-right: 4px;
    background-color: #fff;
    color: #3c3c3e;
}
.add-sheet {
    margin-right: 11px;
}
.zoom-tools {
    display: flex;
    align-items: center;
    margin-left: auto;
    padding-right: 7px;
}
.page-next {
    margin: 0 26px 0 30px;
}
.zoom-range {
    appearance: none;
    width: 321px;
    height: 24px;
    margin: 0 22px 0 10px;
    background: linear-gradient(#dcdcde, #dcdcde) center / 100% 2px no-repeat;
}
.zoom-range::-webkit-slider-thumb {
    appearance: none;
    width: 7px;
    height: 18px;
    border-radius: 3px;
    background-color: #333;
}
.zoom-value {
    width: 51px;
    height: 29px;
    margin: 0 6px 0 11px;
    padding-left: 6px;
    border: 1px solid #d0d0d3;
    background-color: #fff;
}

/* 侧边图标 */
.side-strip {
    position: relative;
    flex: none;
    width: 60px;
    display: flex;
    flex-direction: column;
    background-color: #e7e7e7;
}
.side-fold {
    height: 39px;
    padding-top: 11px;
}
.side-btn {
    height: 48px;
}
.side-btn.current {
    position: relative;
    margin: 0 1px 0 3px;
    border: 3px solid #fd4247;
    background-color: #f1f1f1;
}
.badge {
    position: absolute;
    width: 45px;
    height: 45px;
    border-radius: 50%;
    background-color: #fe282e;
    color: #fff;
    font-family: "Noto Sans CJK SC", sans-serif;
    font-size: 32px;
    line-height: 45px;
    text-align: center;
}
.badge-1 {
    left: 658px;
    top: 703px;
}
.badge-2 {
    left: -55px;
    top: -2px;
}
.badge-3 {
    right: 26px;
    top: 41px;
}
.badge-4 {
    left: 5px;
    top: 811px;
}

/* 属性面板 */
.panel {
    flex: none;
    width: 368px;
    display: flex;
    flex-direction: column;
    background-color: #f4f4f6;
}
.panel-title {
    display: flex;
    align-items: center;
    justify-content: space-between;
    flex: none;
    height: 40px;
    padding: 0 9px 2px 14px;
    border-bottom: 1px solid #d9d9db;
}
.panel-form {
    display: flex;
    flex-direction: column;
    gap: 15px;
    padding: 15px 14px;
}
.field {
    display: flex;
    align-items: center;
}
.field label {
    width: 85px;
}
.field.short label {
    width: 67px;
}
.text-box {
    flex: 1;
    min-width: 0;
    height: 30px;
    padding: 0 4px;
    border: 2px solid #dfe0e2;
    background-color: #fff;
}
.panel-tabs {
    position: relative;
    display: grid;
    grid-template-columns: repeat(4, 1fr);
    gap: 2px;
    flex: none;
    height: 38px;
}
.panel-tabs button {
    background-color: #d8d9dc;
}
.panel-tabs .active {
    background-color: #efeff1;
}
.mark-box {
    position: absolute;
    border: 3px solid #fd4247;
    pointer-events: none;
}
.tab-mark {
    top: -2px;
    right: 0;
    width: 98px;
    height: 42px;
}
.sub-tabs {
    display: flex;
    flex: none;
    height: 30px;
    margin: 15px 15px 6px 6px;
}
.sub-tabs button {
    flex: 1;
    background-color: #fff;
}
.sub-tabs .on, .seg .on {
    background-color: #419bf9;
    color: #fff;
}
.panel-scroll {
    display: flex;
    flex: 1;
    min-height: 0;
    padding-left: 6px;
}
.panel-body {
    flex: 1;
    min-width: 0;
}
.panel-bar {
    width: 6px;
    height: 744px;
    margin: 3px 8px 0 2px;
    border-radius: 3px;
    background-color: #e5e5e7;
}
.section {
    display: flex;
    align-items: center;
    justify-content: space-between;
    height: 36px;
    margin: 9px 0 0;
    padding: 0 7px 0 6px;
    background-color: #ebebec;
    font-size: 18px;
    font-weight: normal;
}
.section:first-child {
    margin-top: 0;
}
.section.spaced {
    margin-top: 24px;
}
.row {
    display: flex;
    align-items: center;
    height: 32px;
    margin-top: 16px;
    padding-left: 6px;
}
.row .label {
    flex: none;
    width: 110px;
}
.row.sub {
    padding-left: 24px;
}
.row.low {
    height: 29px;
}
.row.top {
    height: auto;
    margin-top: 7px;
    align-items: flex-start;
    line-height: 20px;
}
.row.layout {
    height: 30px;
    margin-top: 22px;
}
.row.flush {
    height: 30px;
    margin-top: 0;
}
.row .label.raised {
    align-self: flex-start;
    line-height: 20px;
}
.checks {
    display: flex;
    flex-direction: column;
    gap: 30px;
}
.check {
    display: flex;
    align-items: center;
    gap: 5px;
    margin-left: 5px;
    line-height: 20px;
}
.check input {
    position: relative;
    appearance: none;
    width: 20px;
    height: 20px;
    background-color: #3393f0;
}
.check input:checked::after {
    content: "";
    position: absolute;
    left: 7px;
    top: 2px;
    width: 6px;
    height: 12px;
    border: solid #fff;
    border-width: 0 2px 2px 0;
    transform: rotate(40deg);
}
.layout-btn {
    flex: 1;
    height: 30px;
    border: 2px solid #cfd8e4;
    background-color: #419bf9;
}
.seg {
    display: flex;
    flex: 1;
    height: 32px;
    border: 1px solid #d5d5d8;
    border-right: none;
}
.seg button {
    flex: 1;
    background-color: #fff;
}
.zoom-group {
    position: relative;
    margin-top: 9px;
}
.group-mark {
    top: -5px;
    right: -16px;
    bottom: -12px;
    left: -9px;
}
.row.sub .text-box {
    flex: 0 0 170px;
    height: 29px;
    margin-right: 8px;
    font-family: Roboto, "Noto Sans CJK SC", sans-serif;
}
.fx-btn {
    flex: 1;
    height: 29px;
    border: 2px solid #dfe0e2;
    border-right: none;
    background-color: #fff;
}
.row.interval {
    justify-content: space-between;
    margin-top: 10px;
    padding: 0 10px 0 115px;
}
.spinner {
    display: flex;
    width: 94px;
    height: 29px;
    border: 2px solid #dfe0e2;
    background-color: #fff;
}
.spinner input {
    flex: 1;
    min-width: 0;
    padding-left: 4px;
}
.spin-btns {
    display: flex;
    flex-direction: column;
    width: 20px;
    background-color: #d8d9dc;
}
.spin-btns button {
    flex: 1;
}
.gear-btn {
    width: 29px;
    height: 34px;
    margin-left: auto;
    border: 1px solid #d5d5d8;
    border-right: none;
    background-color: #fff;
}
.add-link {
    flex: 1;
    gap: 4px;
    height: 30px;
    border: 1px solid #d5d5d8;
    border-right: none;
    background-color: #fff;
}
```
